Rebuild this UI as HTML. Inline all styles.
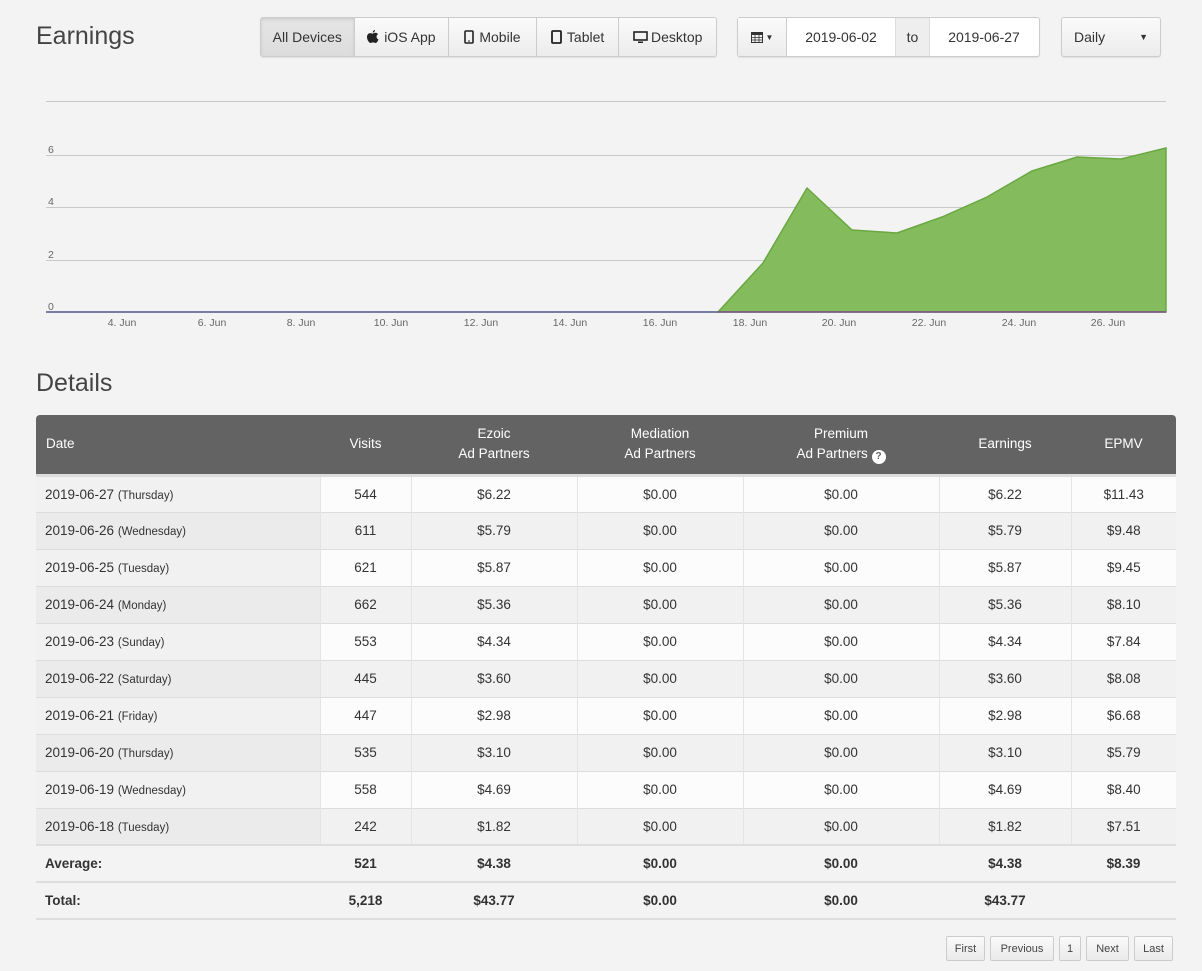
<!DOCTYPE html>
<html><head><meta charset="utf-8">
<style>
*{box-sizing:border-box;margin:0;padding:0}
body{width:1202px;height:971px;background:#f3f3f3;font-family:"Liberation Sans",sans-serif;color:#333;position:relative;overflow:hidden}
.abs{position:absolute}
h1{position:absolute;font-weight:normal;font-size:25px;color:#444}
.btn{position:absolute;top:17px;height:40px;border:1px solid #ccc;background:linear-gradient(#fafafa,#ececec);font-size:14px;color:#333;display:flex;align-items:center;justify-content:center;border-radius:3px;box-shadow:0 1px 1px rgba(0,0,0,.08)}
.grp{display:flex}
.grp div{height:38px;display:flex;align-items:center;justify-content:center;border-right:1px solid #ccc;gap:5px}
.grp div:last-child{border-right:none}
table{position:absolute;left:36px;top:415px;width:1140px;border-collapse:collapse;font-size:13.5px}
th{background:#636363;color:#fff;font-weight:normal;height:60px;text-align:center;line-height:20px}
th:first-child{text-align:left;padding-left:10px;border-radius:4px 0 0 0}
th:last-child{border-radius:0 4px 0 0}
td{height:37px;text-align:center;border-top:1px solid #ddd;border-left:1px solid #e4e4e4;color:#333}
td:first-child{text-align:left;padding-left:9px;border-left:none}
td small{font-size:11.5px}
tr.o td{background:#fcfcfc}
tr.o td:first-child{background:#f1f1f1}
tr.e td{background:#f1f1f1}
tr.e td:first-child{background:#ebebeb}
tr.s td{background:transparent;border-left:none;font-weight:bold;border-top:2px solid #ddd}
tr.s.last td{border-bottom:2px solid #ddd}
tbody tr:first-child td{border-top:3px solid #ddd}
.pg{position:absolute;top:936px;height:25px;border:1px solid #ccc;background:linear-gradient(#fafafa,#eaeaea);font-size:11px;display:flex;align-items:center;justify-content:center;border-radius:2px;color:#444}
</style></head><body>
<h1 style="left:36px;top:22px">Earnings</h1>
<div class="btn grp" style="left:260px;width:457px">
 <div style="width:94px;background:linear-gradient(#e6e6e6,#dcdcdc);box-shadow:inset 0 2px 3px rgba(0,0,0,.1)">All Devices</div>
 <div style="width:95px"><svg width="12" height="14" viewBox="0 0 12 14"><path d="M8 0c0 1.3-1 2.6-2.3 2.6C5.6 1.3 6.6.2 8 0zM6 3.4c.7 0 1.5-.6 2.4-.6 1 0 2 .5 2.6 1.4-2.2 1.2-1.8 4.4.5 5.2-.5 1.4-1.6 3.6-2.9 3.6-1 0-1.3-.6-2.5-.6s-1.6.6-2.5.6C2.2 13 0 10 0 7c0-2.5 1.6-3.9 3.2-3.9 1 0 1.9.6 2.5.6z" fill="#222"/></svg>iOS App</div>
 <div style="width:88px"><svg width="10" height="14"><rect x="1" y="1" width="8" height="12" rx="1" fill="none" stroke="#222" stroke-width="1.6"/><rect x="4" y="10.5" width="2" height="1" fill="#222"/></svg>Mobile</div>
 <div style="width:83px"><svg width="11" height="14"><rect x="1" y="1" width="9" height="12" rx="1" fill="none" stroke="#222" stroke-width="1.8"/></svg>Tablet</div>
 <div style="width:97px;gap:3px"><svg width="15" height="13"><rect x="1" y="1" width="13" height="8" fill="none" stroke="#222" stroke-width="1.6"/><rect x="5" y="10.5" width="5" height="1.5" fill="#222"/></svg>Desktop</div>
</div>
<div class="btn" style="left:737px;width:303px;justify-content:flex-start;background:#fff">
 <div style="width:49px;height:38px;background:linear-gradient(#fafafa,#ececec);border-right:1px solid #ccc;display:flex;align-items:center;justify-content:center;gap:3px"><svg width="12" height="12"><rect x="0.5" y="1.5" width="11" height="10" fill="none" stroke="#333"/><rect x="0.5" y="1.5" width="11" height="2.5" fill="#333"/><path d="M4 4v7M8 4v7M1 6.5h10M1 9h10" stroke="#333" stroke-width=".8"/></svg><span style="font-size:8px">▼</span></div>
 <div style="width:108px;text-align:center">2019-06-02</div>
 <div style="width:35px;height:38px;background:#eee;border-left:1px solid #ddd;border-right:1px solid #ddd;display:flex;align-items:center;justify-content:center">to</div>
 <div style="width:108px;text-align:center">2019-06-27</div>
</div>
<div class="btn" style="left:1061px;width:100px;justify-content:space-between;padding:0 12px"><span>Daily</span><span style="font-size:9px">▼</span></div>

<svg class="abs" style="left:0;top:90px" width="1202" height="250">
 <g stroke="#c8c8c8" stroke-width="1">
  <line x1="46" y1="11.5" x2="1166" y2="11.5"/><line x1="46" y1="65.5" x2="1166" y2="65.5"/>
  <line x1="46" y1="117.5" x2="1166" y2="117.5"/><line x1="46" y1="170.5" x2="1166" y2="170.5"/>
 </g>
 <g font-size="10.5" fill="#666" font-family="Liberation Sans,sans-serif">
  <text x="48" y="63">6</text><text x="48" y="115">4</text><text x="48" y="168">2</text><text x="48" y="220">0</text>
  <g text-anchor="middle">
  <text x="122" y="236">4. Jun</text><text x="212" y="236">6. Jun</text><text x="301" y="236">8. Jun</text><text x="391" y="236">10. Jun</text><text x="481" y="236">12. Jun</text><text x="570" y="236">14. Jun</text><text x="660" y="236">16. Jun</text><text x="750" y="236">18. Jun</text><text x="839" y="236">20. Jun</text><text x="929" y="236">22. Jun</text><text x="1019" y="236">24. Jun</text><text x="1108" y="236">26. Jun</text>
  </g>
 </g>
 <path d="M718 222L763 173L807 98L852 140L897 143L942 127L987 107L1032 81L1077 67L1121 69L1166 58L1166 222Z" fill="#84bb5c" stroke="#6aa842" stroke-width="1.5"/>
 <line x1="46" y1="222" x2="1166" y2="222" stroke="#7b4f8a" stroke-width="1.5"/>
 <line x1="46" y1="222" x2="718" y2="222" stroke="#3a5a8a" stroke-width="1"/>
</svg>

<h1 style="left:36px;top:369px">Details</h1>
<table>
<colgroup><col style="width:284px"><col style="width:91px"><col style="width:166px"><col style="width:166px"><col style="width:196px"><col style="width:132px"><col style="width:105px"></colgroup>
<thead><tr><th>Date</th><th>Visits</th><th>Ezoic<br>Ad Partners</th><th>Mediation<br>Ad Partners</th><th>Premium<br>Ad Partners <span style="display:inline-block;width:14px;height:14px;border-radius:50%;background:#fff;color:#636363;font-size:10px;line-height:14px;font-weight:bold;vertical-align:-1px">?</span></th><th>Earnings</th><th>EPMV</th></tr></thead>
<tbody>
<tr class="o"><td>2019-06-27 <small>(Thursday)</small></td><td>544</td><td>$6.22</td><td>$0.00</td><td>$0.00</td><td>$6.22</td><td>$11.43</td></tr>
<tr class="e"><td>2019-06-26 <small>(Wednesday)</small></td><td>611</td><td>$5.79</td><td>$0.00</td><td>$0.00</td><td>$5.79</td><td>$9.48</td></tr>
<tr class="o"><td>2019-06-25 <small>(Tuesday)</small></td><td>621</td><td>$5.87</td><td>$0.00</td><td>$0.00</td><td>$5.87</td><td>$9.45</td></tr>
<tr class="e"><td>2019-06-24 <small>(Monday)</small></td><td>662</td><td>$5.36</td><td>$0.00</td><td>$0.00</td><td>$5.36</td><td>$8.10</td></tr>
<tr class="o"><td>2019-06-23 <small>(Sunday)</small></td><td>553</td><td>$4.34</td><td>$0.00</td><td>$0.00</td><td>$4.34</td><td>$7.84</td></tr>
<tr class="e"><td>2019-06-22 <small>(Saturday)</small></td><td>445</td><td>$3.60</td><td>$0.00</td><td>$0.00</td><td>$3.60</td><td>$8.08</td></tr>
<tr class="o"><td>2019-06-21 <small>(Friday)</small></td><td>447</td><td>$2.98</td><td>$0.00</td><td>$0.00</td><td>$2.98</td><td>$6.68</td></tr>
<tr class="e"><td>2019-06-20 <small>(Thursday)</small></td><td>535</td><td>$3.10</td><td>$0.00</td><td>$0.00</td><td>$3.10</td><td>$5.79</td></tr>
<tr class="o"><td>2019-06-19 <small>(Wednesday)</small></td><td>558</td><td>$4.69</td><td>$0.00</td><td>$0.00</td><td>$4.69</td><td>$8.40</td></tr>
<tr class="e"><td>2019-06-18 <small>(Tuesday)</small></td><td>242</td><td>$1.82</td><td>$0.00</td><td>$0.00</td><td>$1.82</td><td>$7.51</td></tr>
<tr class="s"><td>Average:</td><td>521</td><td>$4.38</td><td>$0.00</td><td>$0.00</td><td>$4.38</td><td>$8.39</td></tr>
<tr class="s last"><td>Total:</td><td>5,218</td><td>$43.77</td><td>$0.00</td><td>$0.00</td><td>$43.77</td><td></td></tr>
</tbody></table>
<div class="pg" style="left:946px;width:39px">First</div>
<div class="pg" style="left:990px;width:64px">Previous</div>
<div class="pg" style="left:1059px;width:22px">1</div>
<div class="pg" style="left:1086px;width:43px">Next</div>
<div class="pg" style="left:1134px;width:39px">Last</div>
</body></html>
